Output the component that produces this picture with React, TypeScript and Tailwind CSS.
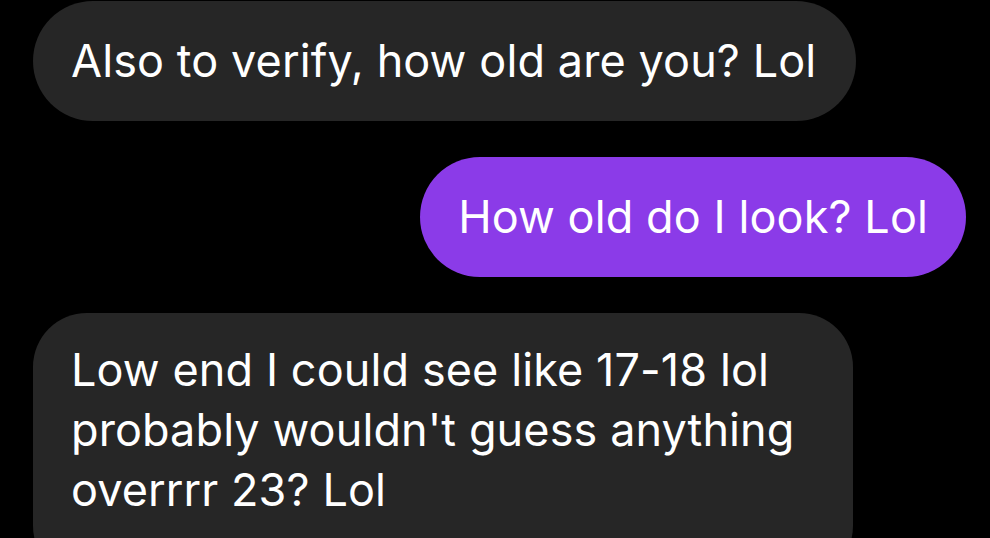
const messages = [
  { id: 1, mine: false, lines: ['Also to verify, how old are you? Lol'] },
  { id: 2, mine: true, lines: ['How old do I look? Lol'] },
  { id: 3, mine: false, lines: ['Low end I could see like 17-18 lol', "probably wouldn't guess anything", 'overrrr 23? Lol'] },
];

export default function App() {
  return (
    <div className="h-[538px] w-[990px] overflow-hidden bg-black pt-px pl-[33px] pr-[24px] font-['Inter','Liberation_Sans',sans-serif] text-white">
      <div className="flex flex-col gap-[36px]">
        {messages.map(m => (
          <div key={m.id} className={`flex ${m.mine ? 'justify-end' : 'justify-start'}`}>
            <div
              className={`w-fit pl-[38px] text-[45px] leading-[60px] tracking-[0.1px] ${
                m.mine
                  ? 'rounded-[60px] bg-[#8b3be8] py-[30px] pr-[38px]'
                  : m.lines.length > 1
                    ? 'rounded-[54px] bg-[#262626] pt-[27px] pr-[58px] pb-[60px]'
                    : 'rounded-[60px] bg-[#262626] py-[30px] pr-[40px]'
              }`}
            >
              {m.lines.map((l, i) => (
                <div key={i} className="whitespace-nowrap">{l}</div>
              ))}
            </div>
          </div>
        ))}
      </div>
    </div>
  );
}
